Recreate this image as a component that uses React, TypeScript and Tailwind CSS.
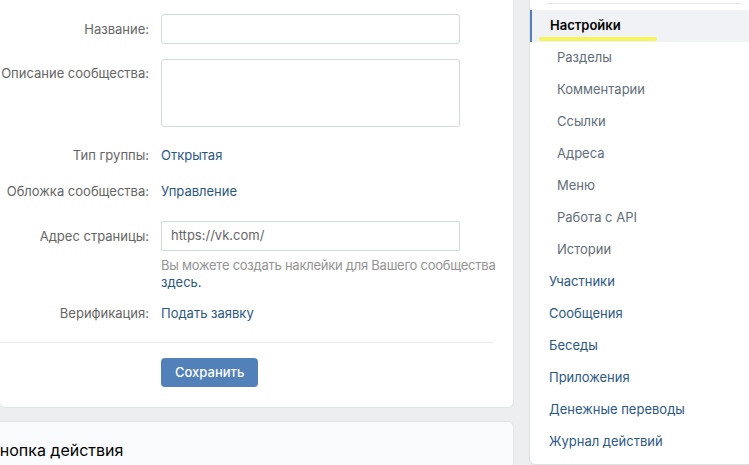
import React from 'react';

const subItems = ['Разделы', 'Комментарии', 'Ссылки', 'Адреса', 'Меню', 'Работа с API', 'Истории'];
const mainItems = ['Участники', 'Сообщения', 'Беседы', 'Приложения', 'Денежные переводы', 'Журнал действий'];

const Label: React.FC<{ children: React.ReactNode; className?: string }> = ({ children, className }) => (
  <div className={`w-[149px] shrink-0 text-right text-[#656565] leading-[17px] whitespace-nowrap ${className ?? ''}`}>{children}</div>
);

export default function App() {
  return (
    <div
      className="w-[749px] h-[465px] overflow-hidden bg-[#edeef0] flex gap-[15px] text-[13px]"
      style={{ fontFamily: 'Inter, Roboto, "Liberation Sans", sans-serif' }}
    >
      {/* Left column */}
      <div className="w-[514px] shrink-0 flex flex-col gap-[13px]">
        <div className="bg-white rounded-b-[6px] border-b border-r border-[#e3e4e8] pr-5 pb-5">
          <div className="flex items-center mt-[14px]">
            <Label>Название:</Label>
            <input className="ml-3 w-[299px] h-[30px] border border-[#d3d9de] rounded-[3px] px-2 outline-none" />
          </div>

          <div className="flex items-start mt-[15px]">
            <Label className="pt-[6px]">Описание сообщества:</Label>
            <textarea className="ml-3 w-[299px] h-[68px] border border-[#d3d9de] rounded-[3px] px-2 resize-none outline-none" />
          </div>

          <div className="flex leading-[17px] mt-5">
            <Label>Тип группы:</Label>
            <a className="ml-3 text-[#2a5885]">Открытая</a>
          </div>

          <div className="flex leading-[17px] mt-[19px]">
            <Label>Обложка сообщества:</Label>
            <a className="ml-3 text-[#2a5885]">Управление</a>
          </div>

          <div className="flex items-center mt-[21px]">
            <Label>Адрес страницы:</Label>
            <div className="ml-3 w-[299px] h-[30px] border border-[#d3d9de] rounded-[2px] px-[9px] flex items-center text-[#656565]">
              https://vk.com/
            </div>
          </div>
          <div className="ml-[161px] -mr-5 mt-[6px] leading-[17px] text-[#939393] whitespace-nowrap tracking-[-0.25px]">
            Вы можете создать наклейки для Вашего сообщества
            <br />
            <a className="text-[#2a5885] tracking-normal">здесь.</a>
          </div>

          <div className="flex leading-[17px] mt-[14px]">
            <Label>Верификация:</Label>
            <a className="ml-3 text-[#2a5885]">Подать заявку</a>
          </div>

          <div className="h-px bg-[#e7e8ec] mt-5" />

          <button className="ml-[161px] mt-[15px] h-[29px] px-[14px] rounded-[4px] bg-[#5181b8] text-white font-medium">
            Сохранить
          </button>
        </div>

        <div className="flex-1 bg-[#fafbfc] rounded-t-[6px] border-t border-r border-[#e3e4e8] -ml-[11px] pt-[18px]">
          <h2 className="text-[16px] text-black leading-[20px] whitespace-nowrap">Кнопка действия</h2>
        </div>
      </div>

      {/* Right menu */}
      <div className="w-[230px] shrink-0 self-start bg-white rounded-b-[6px] border border-t-0 border-[#dce1e6] pb-[6px]">
        <div className="h-px bg-[#e7e8ec] mx-4 mt-[3px] mb-[6px]" />
        <div className="relative h-[32px] bg-[#f0f2f5] border-l-2 border-[#5181b8] pl-[18px] flex items-center font-semibold text-black">
          Настройки
          <span className="absolute left-[7px] top-[27px] w-[118px] h-[4px] rounded-full bg-[#f6f34a] opacity-90" />
        </div>
        {subItems.map(item => (
          <div key={item} className="h-[32px] pl-[27px] flex items-center text-[#626d7a]">
            {item}
          </div>
        ))}
        {mainItems.map(item => (
          <div key={item} className="h-[32px] pl-[19px] flex items-center text-[#2a5885]">
            {item}
          </div>
        ))}
      </div>
    </div>
  );
}
